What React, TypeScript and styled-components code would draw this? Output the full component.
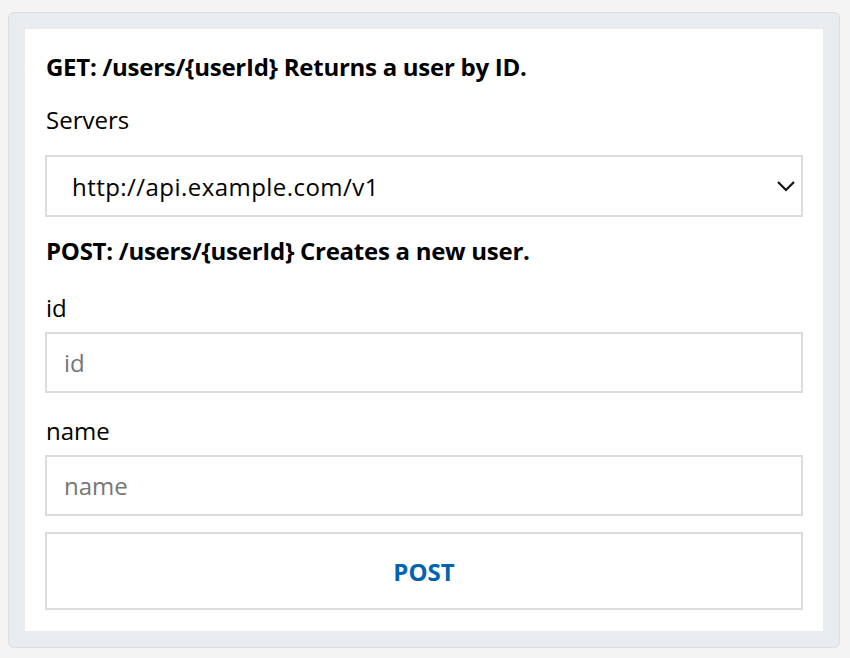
import React from "react";
import styled, { createGlobalStyle } from "styled-components";

const Global = createGlobalStyle`
  html, body { margin: 0; padding: 0; background: #f4f4f4; }
  body { font-family: "Open Sans", "Noto Sans", sans-serif; color: #000; }
  * { box-sizing: border-box; }
`;

const Page = styled.div`
  padding: 12px 11px 10px 8px;
`;

const Panel = styled.div`
  width: 832px;
  background: #e9ecef;
  border: 1px solid #dcdfe2;
  border-radius: 6px;
  padding: 16px;
`;

const Card = styled.div`
  background: #fff;
  padding: 20px 20px 21px 20px;
  display: flex;
  flex-direction: column;
`;

const Heading = styled.div<{ $mt?: number }>`
  font-size: 24px;
  font-weight: 700;
  line-height: 36px;
  letter-spacing: -0.27px;
  padding-left: 1px;
  margin-top: ${(p) => p.$mt ?? 0}px;
`;

const Label = styled.label<{ $mt: number }>`
  display: block;
  font-size: 24px;
  line-height: 36px;
  padding-left: 1px;
  margin-top: ${(p) => p.$mt}px;
`;

const SelectBox = styled.div`
  margin-top: 17px;
  height: 62px;
  border: 2px solid #dcdcdc;
  display: flex;
  align-items: center;
  justify-content: space-between;
  padding: 0 5px 0 25px;
  font-size: 24px;
  letter-spacing: 0.45px;
`;

const Input = styled.input`
  display: block;
  width: 100%;
  margin-top: 6px;
  height: 61px;
  border: 2px solid #dcdcdc;
  padding: 0 17px;
  font-family: "Open Sans", "Noto Sans", sans-serif;
  font-size: 24px;
  color: #000;
  outline: none;
  &::placeholder { color: #767676; }
`;

const Button = styled.button`
  margin-top: 16px;
  height: 78px;
  width: 100%;
  background: #fff;
  border: 2px solid #dcdcdc;
  font-family: "Open Sans", "Noto Sans", sans-serif;
  font-size: 24px;
  font-weight: 700;
  color: #0063b1;
  cursor: pointer;
`;

const Chevron = () => (
  <svg width="20" height="12" viewBox="0 0 20 12" fill="none">
    <path d="M2 2 L10 10 L18 2" stroke="#111" strokeWidth="2.2" />
  </svg>
);

export default function App() {
  return (
    <>
      <Global />
      <Page>
        <Panel>
          <Card>
            <Heading>GET: /users/{"{userId}"} Returns a user by ID.</Heading>
            <Label $mt={17}>Servers</Label>
            <SelectBox>
              <span>http://api.example.com/v1</span>
              <Chevron />
            </SelectBox>
            <Heading $mt={16}>POST: /users/{"{userId}"} Creates a new user.</Heading>
            <Label $mt={21}>id</Label>
            <Input placeholder="id" />
            <Label $mt={20}>name</Label>
            <Input placeholder="name" />
            <Button>POST</Button>
          </Card>
        </Panel>
      </Page>
    </>
  );
}
